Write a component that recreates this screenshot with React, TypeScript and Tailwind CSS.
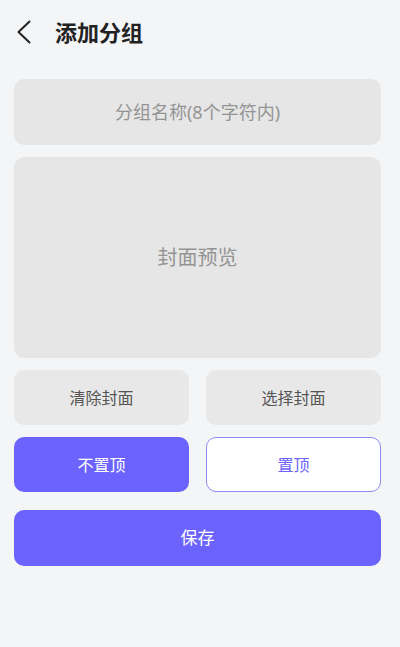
export default function App() {
  return (
    <main
      className="min-h-[647px] w-full bg-[#f4f5f7] pl-[14px] pr-[19px]"
      style={{ fontFamily: '"Noto Sans", "Noto Sans CJK SC", sans-serif' }}
    >
      {/* 头部 */}
      <header className="flex h-[64px] items-center">
        <svg width="14" height="24" viewBox="0 0 14 24" className="ml-[3px]" fill="none">
          <path d="M12.5 1.5 L1.5 12 L12.5 22.5" stroke="#222" strokeWidth="2" strokeLinecap="round" strokeLinejoin="round" />
        </svg>
        <h1 className="ml-[24px] text-[22px] font-bold text-[#222]">添加分组</h1>
      </header>

      <div className="mt-[15px] flex flex-col">
        <div className="flex h-[66px] items-center justify-center rounded-[10px] bg-[#e6e6e6]">
          <span className="text-[18px] text-[#949494]">分组名称(8个字符内)</span>
        </div>

        <div className="mt-[12px] flex h-[201px] items-center justify-center rounded-[10px] bg-[#e6e6e6]">
          <span className="text-[20px] text-[#949494]">封面预览</span>
        </div>

        <div className="mt-[12px] grid grid-cols-2 gap-[17px]">
          <button className="h-[55px] rounded-[10px] bg-[#e8e8e8] text-[16px] text-[#555]">清除封面</button>
          <button className="h-[55px] rounded-[10px] bg-[#e8e8e8] text-[16px] text-[#555]">选择封面</button>
        </div>

        <div className="mt-[12px] grid grid-cols-2 gap-[17px]">
          <button className="h-[55px] rounded-[10px] bg-[#6c63ff] text-[16px] text-white">不置顶</button>
          <button className="h-[55px] rounded-[10px] border-[1.5px] border-[#8f88f0] bg-white text-[16px] text-[#6c63ff]">
            置顶
          </button>
        </div>

        <button className="mt-[18px] h-[56px] rounded-[10px] bg-[#6c63ff] text-[17px] text-white">保存</button>
      </div>
    </main>
  )
}
